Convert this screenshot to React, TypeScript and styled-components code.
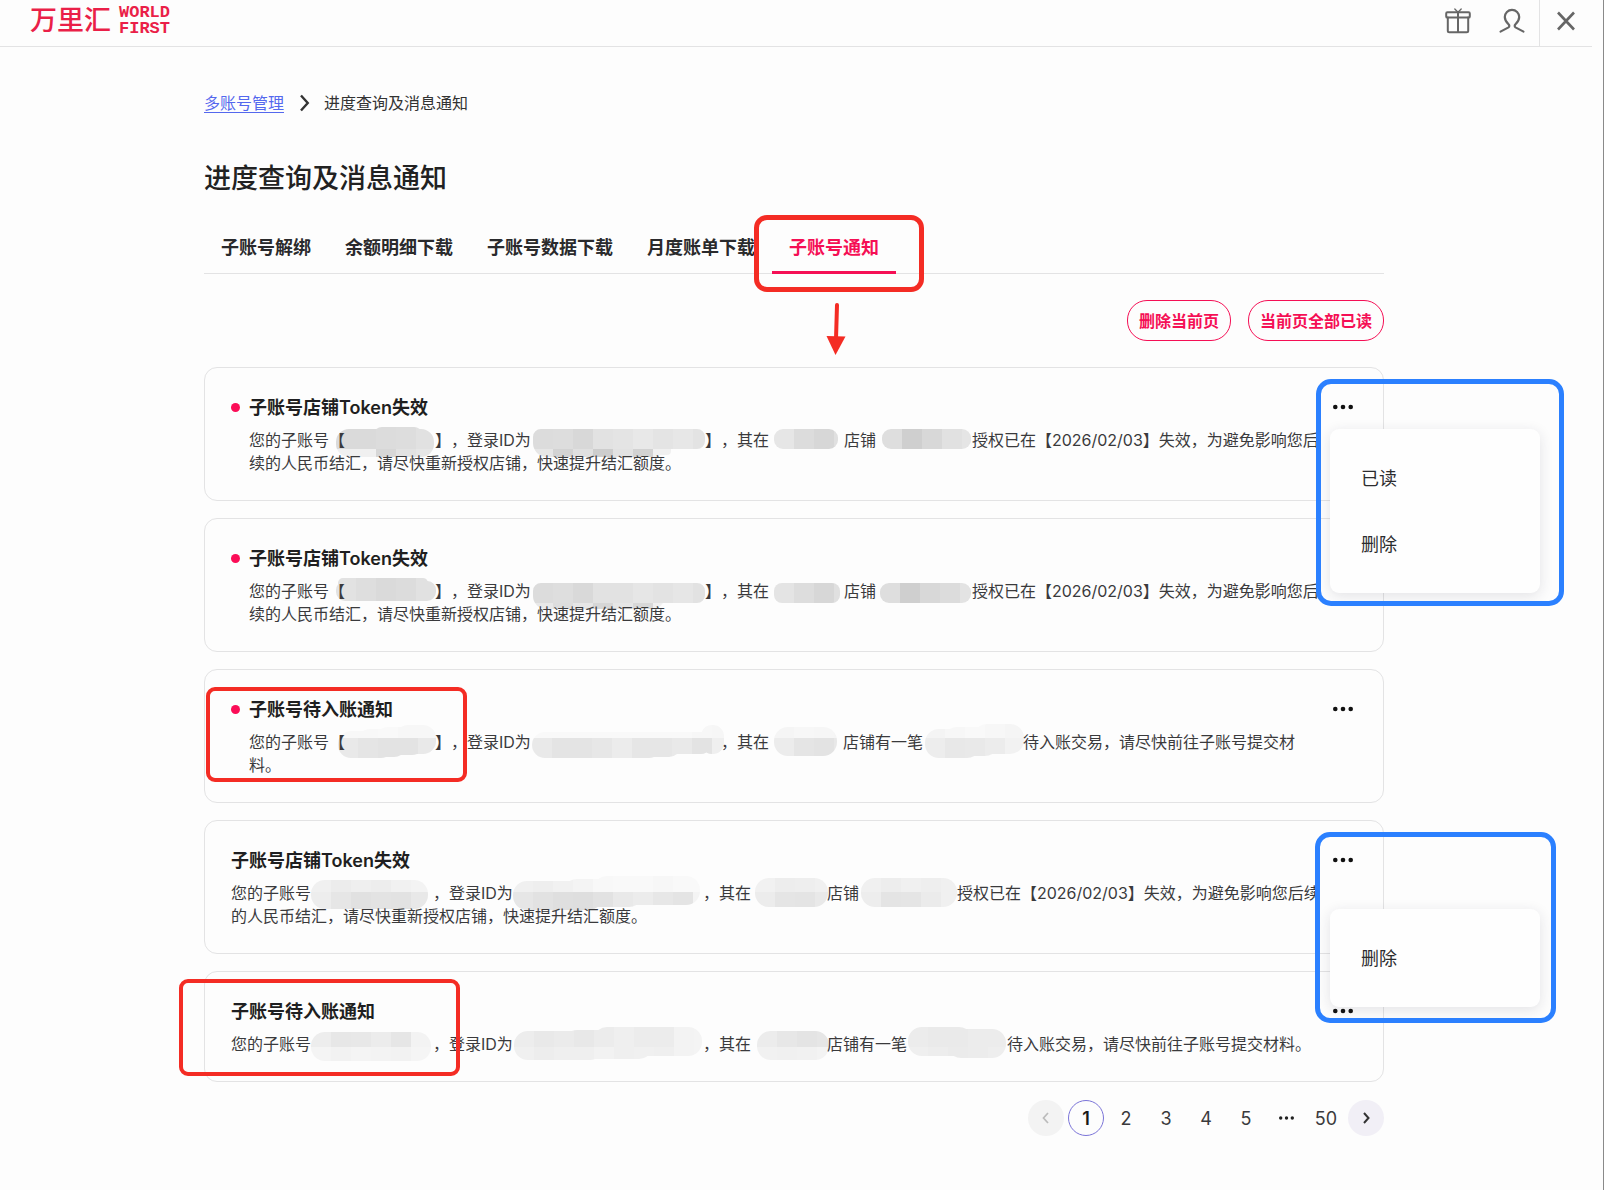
import React, { useId } from 'react';
import styled, { createGlobalStyle, css } from 'styled-components';

const RED = '#f42c24';
const BLUE = '#2b80ff';
const BRAND = '#f50f55';
const LINE = '#e3e3e4';

const GlobalStyle = createGlobalStyle`
  *, *::before, *::after { box-sizing: border-box; }
  body {
    margin: 0;
    background: #fdfdfd;
    color: #222;
    font-family: Inter, "Noto Sans CJK SC", sans-serif;
    font-size: 16px;
    text-spacing-trim: space-all;
  }
  button { font: inherit; color: inherit; background: none; border: 0; padding: 0; cursor: pointer; }
  h1, h2, p, ul, ol { margin: 0; padding: 0; }
  ul, ol { list-style: none; }
  svg { display: block; }
`;

const Page = styled.div`
  min-height: 100vh;
  padding-right: 11px;
  border-right: 1px solid #8a8a8a;
`;

const Header = styled.header`
  display: flex;
  justify-content: space-between;
  height: 47px;
  border-bottom: 1px solid ${LINE};
`;

const Logo = styled.a`
  display: flex;
  align-items: center;
  gap: 8px;
  padding: 0 0 5px 30px;
  color: #ea1f48;
  text-decoration: none;
`;

const LogoName = styled.span`
  font-size: 27px;
  line-height: 32px;
  font-weight: 500;
`;

const LogoLatin = styled.span`
  display: flex;
  flex-direction: column;
  font-family: "Liberation Mono", monospace;
  font-weight: 700;
  font-size: 17px;
  line-height: 16px;
`;

const HeaderTools = styled.div`
  display: flex;
  color: #666;
`;

const ToolGroup = styled.div`
  display: flex;
  align-items: center;
  gap: 28px;
  padding: 0 14px 5px 0;
`;

const CloseCell = styled.div`
  display: flex;
  justify-content: center;
  align-items: center;
  width: 53px;
  padding-bottom: 5px;
  border-left: 1px solid ${LINE};
`;

const Main = styled.main`
  padding: 44px 208px 52px 204px;
`;

const Breadcrumb = styled.nav`
  display: flex;
  align-items: center;
  gap: 11px;
  line-height: 24px;
  color: #333;
`;

const CrumbLink = styled.a`
  color: #5468ee;
  text-decoration: underline;
  text-underline-offset: 3px;
`;

const Heading = styled.h1`
  margin-top: 46px;
  font-size: 27px;
  line-height: 36px;
  font-weight: 500;
`;

const Tabs = styled.div`
  display: flex;
  margin-top: 39px;
  border-bottom: 1px solid ${LINE};
`;

const Tab = styled.button<{ $active?: boolean }>`
  position: relative;
  padding: 0 17px 11px;
  margin-bottom: -1px;
  border-bottom: 3px solid ${p => (p.$active ? BRAND : 'transparent')};
  color: ${p => (p.$active ? BRAND : '#2a2a2c')};
  font-size: 18px;
  line-height: 24px;
  font-weight: 600;
`;

const Mark = styled.span<{ $color: string; $t: number; $l?: number; $r?: number; $w: number; $h: number; $b: number; $radius: number }>`
  position: absolute;
  z-index: 5;
  top: ${p => p.$t}px;
  ${p => (p.$r !== undefined ? `right: ${p.$r}px;` : `left: ${p.$l}px;`)}
  width: ${p => p.$w}px;
  height: ${p => p.$h}px;
  border: ${p => p.$b}px solid ${p => p.$color};
  border-radius: ${p => p.$radius}px;
  pointer-events: none;
`;

const ArrowMark = styled.span`
  position: absolute;
  top: 67px;
  left: 50%;
  margin-left: -8px;
  pointer-events: none;
`;

const Actions = styled.div`
  display: flex;
  justify-content: flex-end;
  gap: 17px;
  margin: 26px 0;
`;

const PillButton = styled.button`
  height: 41px;
  padding: 0 11px;
  border: 1px solid ${BRAND};
  border-radius: 20px;
  color: ${BRAND};
  line-height: 22px;
  font-weight: 600;
`;

const Cards = styled.ul`
  display: flex;
  flex-direction: column;
  gap: 17px;
`;

const Card = styled.li`
  position: relative;
  display: flex;
  gap: 6px;
  padding: 27px 26px 25px;
  border: 1px solid ${LINE};
  border-radius: 13px;
`;

const Dot = styled.span`
  flex: none;
  width: 9px;
  height: 9px;
  margin: 8px 9px 0 0;
  border-radius: 50%;
  background: #fb0d57;
`;

const Body = styled.div`
  flex: 1;
  min-width: 0;
`;

const BodyRow = styled.div`
  display: flex;
  flex: 1;
  min-width: 0;
`;

const Title = styled.h2`
  font-size: 18px;
  line-height: 26px;
  font-weight: 600;
  color: #1f1f21;
`;

const Text = styled.p`
  isolation: isolate;
  margin-top: 8px;
  line-height: 23px;
  color: #3a3a3c;
`;

const MoreButton = styled.button`
  display: flex;
  flex: none;
  align-items: center;
  justify-content: center;
  width: 28px;
  height: 24px;
  color: #111;
`;

const Menu = styled.ul<{ $top: number }>`
  position: absolute;
  z-index: 4;
  top: ${p => p.$top}px;
  right: -157px;
  width: 210px;
  padding: 15px 0 17px;
  border-radius: 9px;
  background: #fefefe;
  box-shadow: 0 3px 14px rgba(30, 30, 60, 0.12);
`;

const MenuButton = styled.button`
  display: block;
  width: 100%;
  height: 66px;
  padding-left: 31px;
  text-align: left;
  font-size: 18px;
  color: #2c2c2e;
`;

const SmudgeBox = styled.span<{ $w: number }>`
  display: inline-block;
  position: relative;
  z-index: -1;
  width: ${p => p.$w}px;
  height: 23px;
  vertical-align: top;
  svg { position: absolute; top: -1px; left: 0; overflow: visible; }
`;

const Pager = styled.nav`
  display: flex;
  justify-content: flex-end;
  align-items: center;
  gap: 4px;
  margin-top: 18px;
  font-size: 18px;
`;

const PageButton = styled.button<{ $kind?: 'current' | 'prev' | 'next' }>`
  display: flex;
  align-items: center;
  justify-content: center;
  width: 36px;
  height: 36px;
  border-radius: 50%;
  color: #3a3a3c;
  ${p => p.$kind === 'current' && css`border: 1px solid #7b74d8; color: #1a1a1a; font-weight: 600;`}
  ${p => p.$kind === 'prev' && css`background: #f3f3f3; color: #bbb;`}
  ${p => p.$kind === 'next' && css`background: #f1eff6; color: #333;`}
`;

const PageGap = styled.span`
  display: flex;
  justify-content: center;
  width: 36px;
`;

type Blob = [x: number, y: number, w: number, h: number, r: number];
interface SmudgeArt {
  w: number;
  x: number;
  split: number;
  blobs: Blob[];
  top: string[];
  bottom: string[];
}

/* A pixelated patch that hides private text: a grid of grey cells clipped to brush strokes. */
function Smudge({ art }: { art: SmudgeArt }) {
  const id = useId();
  return (
    <SmudgeBox $w={art.w}>
      <svg width={art.w} height={23} aria-hidden="true">
        <clipPath id={id}>
          {art.blobs.map(([x, y, w, h, r], i) => (
            <rect key={i} x={x} y={y} width={w} height={h} rx={r} />
          ))}
        </clipPath>
        <g clipPath={`url(#${id})`} shapeRendering="crispEdges">
          {art.top.map((c, i) => (
            <rect key={`t${i}`} x={art.x + i * 20} y={art.split - 30} width={20} height={30} fill={`#${c}${c}${c}`} />
          ))}
          {art.bottom.map((c, i) => (
            <rect key={`b${i}`} x={art.x + i * 20} y={art.split} width={20} height={20} fill={`#${c}${c}${c}`} />
          ))}
        </g>
      </svg>
    </SmudgeBox>
  );
}

const s = (w: number, x: number, split: number, blobs: Blob[], top: string, bottom: string): SmudgeArt => ({
  w, x, split, blobs, top: top.split(' '), bottom: bottom.split(' '),
});

const tokenArt1 = [
  s(90, -9, 21, [[-9, 1, 98, 28, 13], [28, -1, 50, 20, 9]], 'da da dc dd e1', 'f0 f0 d7 e2 e6'),
  s(174, 2, 21, [[2, 1, 172, 20, 8], [2, 1, 134, 28, 14], [100, 10, 40, 17, 4]], 'dc dd d8 e2 e4 e8 e4 e7 e3', 'e6 d3 e0 cd e2 d2 f0 f0 f0'),
  s(75, 5, 21, [[5, 1, 64, 20, 9]], 'e6 dc d7 e0', 'e6 dc d7 e0'),
  s(96, 6, 21, [[6, 1, 89, 20, 9]], 'de cf d8 e1 e5', 'de cf d8 e1 e5'),
];
const tokenArt2 = [
  s(90, -9, 21, [[-9, 2, 100, 20, 9], [-7, -1, 90, 10, 5]], 'e2 de da dc e1', 'e2 de da dc e1'),
  s(174, 2, 24, [[2, 4, 172, 20, 8], [2, 4, 132, 26, 13]], 'dc de d9 e2 e2 e6 e3 e6 e2', 'e8 dd e6 d6 e6 d8 f0 f0 f0'),
  s(75, 5, 24, [[5, 4, 66, 20, 8]], 'e4 dd d7 e0', 'e4 dd d7 e0'),
  s(96, 4, 24, [[4, 4, 91, 20, 9]], 'de cf d8 dc e3', 'de cf d8 dc e3'),
];
const creditArt1 = [
  s(90, -7, 8, [[-7, 1, 56, 27, 13], [12, -1, 50, 28, 13], [30, -3, 50, 28, 13], [50, -5, 41, 29, 13]], 'f8 f8 f9 f7 f7', 'e9 e5 e3 e3 e9'),
  s(190, 1, 8, [[1, 2, 130, 26, 13], [90, 2, 60, 25, 12], [110, 2, 70, 22, 10], [170, -5, 23, 29, 11]], 'f9 f9 f9 f9 f9 f9 f9 f9 f7 f6', 'e9 e4 e4 e7 ec e6 e6 e9 e3 ef'),
  s(74, 5, 8, [[5, -3, 63, 29, 14]], 'f5 f7 f6 f5', 'ec e5 e3 e8'),
  s(100, 2, 8, [[2, -1, 56, 29, 14], [20, -3, 56, 29, 14], [50, -6, 51, 30, 14]], 'f4 f7 f9 f7 f5', 'ed e8 e9 ec f2'),
];
const tokenArt3 = [
  s(122, 0, 11, [[0, -1, 117, 29, 14]], 'f0 ec ef ed f1 f3', 'ed e6 e1 e3 e2 e8'),
  s(190, 0, 11, [[0, 0, 90, 29, 14], [50, -2, 80, 28, 14], [80, -5, 107, 29, 14]], 'f0 ee f1 f4 f8 f9 f9 f7 f9 f9', 'e6 e2 df de e2 e9 ec e7 e4 f4'),
  s(76, 4, 11, [[4, -3, 73, 29, 14]], 'f1 ed ee f0', 'ec e5 e4 e9'),
  s(98, 2, 11, [[2, -3, 96, 29, 14]], 'f0 ed f0 ee f0', 'ed e4 e5 eb f0'),
];
const creditArt2 = [
  s(122, 0, 15, [[0, 0, 120, 29, 14]], 'ed e7 e8 ec e6 f3', 'f4 f2 f4 f3 f2 f5'),
  s(190, 1, 15, [[1, -1, 90, 29, 14], [50, -2, 90, 29, 14], [80, -5, 109, 29, 14]], 'ed e9 eb e8 ec ef ec ec f3 f4', 'f0 ed ef ef f2 ef f0 ef f3 f4'),
  s(76, 6, 15, [[6, -1, 72, 29, 14]], 'ec e7 e4 e6', 'f1 f0 f1 f3'),
  s(100, 1, 15, [[1, -5, 65, 29, 14], [40, -3, 59, 29, 14]], 'ec ea ea ec ec', 'ef ed eb ec ee'),
];

interface Notice {
  title: string;
  unread: boolean;
  parts: string[];
  art: SmudgeArt[];
  menu?: { top: number; items: string[] };
  marks?: React.ReactNode;
}

const notices: Notice[] = [
  {
    title: '子账号店铺Token失效',
    unread: true,
    parts: ['您的子账号【', '】,登录ID为', '】,其在', '店铺', '授权已在【2026/02/03】失效,为避免影响您后续的人民币结汇,请尽快重新授权店铺,快速提升结汇额度。'],
    art: tokenArt1,
    menu: { top: 61, items: ['已读', '删除'] },
    marks: <Mark $color={BLUE} $t={11} $r={-181} $w={248} $h={227} $b={5} $radius={15} />,
  },
  {
    title: '子账号店铺Token失效',
    unread: true,
    parts: ['您的子账号【', '】,登录ID为', '】,其在', '店铺', '授权已在【2026/02/03】失效,为避免影响您后续的人民币结汇,请尽快重新授权店铺,快速提升结汇额度。'],
    art: tokenArt2,
  },
  {
    title: '子账号待入账通知',
    unread: true,
    parts: ['您的子账号【', '】,登录ID为', ',其在', '店铺有一笔', '待入账交易,请尽快前往子账号提交材料。'],
    art: creditArt1,
    marks: <Mark $color={RED} $t={17} $l={1} $w={261} $h={95} $b={4} $radius={9} />,
  },
  {
    title: '子账号店铺Token失效',
    unread: false,
    parts: ['您的子账号', ',登录ID为', ',其在', '店铺', '授权已在【2026/02/03】失效,为避免影响您后续的人民币结汇,请尽快重新授权店铺,快速提升结汇额度。'],
    art: tokenArt3,
    menu: { top: 88, items: ['删除'] },
    marks: <Mark $color={BLUE} $t={11} $r={-173} $w={241} $h={191} $b={5} $radius={15} />,
  },
  {
    title: '子账号待入账通知',
    unread: false,
    parts: ['您的子账号', ',登录ID为', ',其在', '店铺有一笔', '待入账交易,请尽快前往子账号提交材料。'],
    art: creditArt2,
    marks: <Mark $color={RED} $t={7} $l={-26} $w={281} $h={97} $b={4} $radius={9} />,
  },
];

const GiftIcon = () => (
  <svg width="26" height="26" viewBox="0 0 26 26" fill="none" stroke="currentColor" strokeWidth="2" strokeLinejoin="round" strokeLinecap="round">
    <rect x="1.2" y="4.2" width="23.6" height="5.4" rx="1.2" />
    <path d="M2.8 9.6v13.2c0 .9.6 1.5 1.5 1.5h17.4c.9 0 1.5-.6 1.5-1.5V9.6M13 4.4v19.8" />
    <path d="M9.8 1l3.2 3.2L16.2 1" strokeWidth="1.3" />
  </svg>
);

const UserIcon = () => (
  <svg width="26" height="26" viewBox="0 0 26 26" fill="none" stroke="currentColor" strokeWidth="2.2" strokeLinejoin="round" strokeLinecap="round">
    <path d="M1.5 23.6l8-4.2c1.1-.7 1-1.9.2-2.9C7.400 14.400 5.800 12.200 5.800 9a7.200 7.200 0 0 1 14.400 0c0 3.200-1.600 5.400-3.900 7.500-.8 1-.9 2.200.2 2.900l8 4.200" />
  </svg>
);

const CloseIcon = () => (
  <svg width="20" height="20" viewBox="0 0 20 20" fill="none" stroke="currentColor" strokeWidth="2.6">
    <path d="M2 1.5l16 17M18 1.5l-16 17" />
  </svg>
);

const Chevron = ({ size, flip, weight = 2 }: { size: number; flip?: boolean; weight?: number }) => (
  <svg width={size} height={size} viewBox="0 0 12 12" fill="none" stroke="currentColor" strokeWidth={weight} aria-hidden="true">
    <path d={flip ? 'M8 1L3.5 6L8 11' : 'M4 1L8.5 6L4 11'} />
  </svg>
);

const Dots = ({ width, r }: { width: number; r: number }) => (
  <svg width={width} height="6" viewBox={`0 0 ${width} 6`} fill="currentColor" aria-hidden="true">
    <circle cx={r} cy="3" r={r} />
    <circle cx={width / 2} cy="3" r={r} />
    <circle cx={width - r} cy="3" r={r} />
  </svg>
);

function NoticeCard({ notice }: { notice: Notice }) {
  return (
    <Card>
      <BodyRow>
        {notice.unread && <Dot />}
        <Body>
          <Title>{notice.title}</Title>
          <Text>
            {notice.parts.map((part, i) => (
              <React.Fragment key={i}>
                {part.replace(/,/g, '\uff0c')}
                {notice.art[i] && <Smudge art={notice.art[i]} />}
              </React.Fragment>
            ))}
          </Text>
        </Body>
      </BodyRow>
      <MoreButton aria-label="更多">
        <Dots width={20} r={2.3} />
      </MoreButton>
      {notice.menu && (
        <Menu $top={notice.menu.top}>
          {notice.menu.items.map(item => (
            <li key={item}>
              <MenuButton>{item}</MenuButton>
            </li>
          ))}
        </Menu>
      )}
      {notice.marks}
    </Card>
  );
}

export default function App() {
  return (
    <Page>
      <GlobalStyle />
      <Header>
        <Logo href="#home">
          <LogoName>万里汇</LogoName>
          <LogoLatin>
            <span>WORLD</span>
            <span>FIRST</span>
          </LogoLatin>
        </Logo>
        <HeaderTools>
          <ToolGroup>
            <button aria-label="礼物"><GiftIcon /></button>
            <button aria-label="账户"><UserIcon /></button>
          </ToolGroup>
          <CloseCell>
            <button aria-label="关闭"><CloseIcon /></button>
          </CloseCell>
        </HeaderTools>
      </Header>
      <Main>
        <Breadcrumb aria-label="面包屑">
          <CrumbLink href="#accounts">多账号管理</CrumbLink>
          <Chevron size={18} weight={1.6} />
          <span>进度查询及消息通知</span>
        </Breadcrumb>
        <Heading>进度查询及消息通知</Heading>
        <Tabs role="tablist">
          {['子账号解绑', '余额明细下载', '子账号数据下载', '月度账单下载'].map(name => (
            <Tab key={name} role="tab" aria-selected={false}>{name}</Tab>
          ))}
          <Tab role="tab" aria-selected $active>
            子账号通知
            <Mark $color={RED} $t={-21} $l={-18} $w={170} $h={77} $b={5} $radius={13} />
            <ArrowMark>
              <svg width="20" height="52" viewBox="0 0 20 52" aria-hidden="true">
                <path d="M11 2L10 36" stroke={RED} strokeWidth="4" strokeLinecap="round" />
                <path d="M0.5 33L19.5 33.5L9.5 52Z" fill={RED} />
              </svg>
            </ArrowMark>
          </Tab>
        </Tabs>
        <Actions>
          <PillButton>删除当前页</PillButton>
          <PillButton>当前页全部已读</PillButton>
        </Actions>
        <Cards>
          {notices.map((notice, i) => (
            <NoticeCard key={i} notice={notice} />
          ))}
        </Cards>
        <Pager aria-label="分页">
          <PageButton $kind="prev" disabled aria-label="上一页"><Chevron size={12} flip weight={1.7} /></PageButton>
          <PageButton $kind="current" aria-current="page">1</PageButton>
          {['2', '3', '4', '5'].map(n => <PageButton key={n}>{n}</PageButton>)}
          <PageGap><Dots width={15} r={1.7} /></PageGap>
          <PageButton>50</PageButton>
          <PageButton $kind="next" aria-label="下一页"><Chevron size={12} weight={2} /></PageButton>
        </Pager>
      </Main>
    </Page>
  );
}
